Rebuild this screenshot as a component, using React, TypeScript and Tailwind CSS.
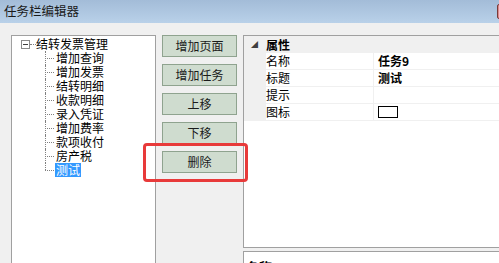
import React from "react";

const font = { fontFamily: '"Noto Sans CJK SC", "Noto Sans", sans-serif' };

const children = ["增加查询", "增加发票", "结转明细", "收款明细", "录入凭证", "增加费率", "款项收付", "房产税", "测试"];
const buttons = ["增加页面", "增加任务", "上移", "下移", "删除"];

function TreeChild({ label, last, selected }: { label: string; last: boolean; selected: boolean }) {
  return (
    <div className="flex h-[14px] items-stretch">
      <div className="relative ml-[33px] w-[10px] shrink-0">
        <div className={`absolute left-0 top-0 border-l border-dotted border-[#808080] ${last ? "h-[7px]" : "h-[14px]"}`} />
        <div className="absolute left-0 top-[7px] w-[9px] border-t border-dotted border-[#808080]" />
      </div>
      <div
        className={`px-[1px] text-[12px] leading-[14px] ${selected ? "bg-[#3399ff] text-white" : "text-black"}`}
      >
        {label}
      </div>
    </div>
  );
}

export default function App() {
  return (
    <div className="relative h-[263px] w-[499px] overflow-hidden bg-[#f0f0f0]" style={font}>
      {/* title bar */}
      <div className="flex h-[23px] items-center bg-gradient-to-b from-[#a3bcd8] to-[#b9d1e9] pl-[4px]">
        <span className="text-[12.5px] leading-none text-[#1a1a1a]">任务栏编辑器</span>
        <div className="ml-auto mr-[-4px] h-[15px] w-[6px] rounded-[2px] border border-[#7a3a3a] bg-[#d98c8c]" />
      </div>
      {/* body */}
      <div className="flex pl-[11px] pt-[12px]">
        {/* tree */}
        <div className="h-[260px] w-[145px] shrink-0 border border-[#a0a0a0] bg-white pt-[1px]">
          <div className="flex h-[14px] items-center">
            <div className="ml-[9px] flex h-[9px] w-[9px] shrink-0 items-center justify-center border border-[#8a8a8a] bg-white">
              <div className="h-[1px] w-[5px] bg-[#404040]" />
            </div>
            <div className="w-[6px] shrink-0 border-t border-dotted border-[#808080]" />
            <span className="text-[12px] leading-[14px] text-black">结转发票管理</span>
          </div>
          {children.map((c, i) => (
            <TreeChild key={c} label={c} last={i === children.length - 1} selected={c === "测试"} />
          ))}
        </div>
        {/* buttons */}
        <div className="flex w-[87px] shrink-0 flex-col gap-[7px] pl-[6px]">
          {buttons.map((b) => (
            <div
              key={b}
              className="flex h-[22px] w-[75px] items-center justify-center border border-[#8fa38f] bg-[#cfdccf] text-[12px] text-[#1a1a1a]"
            >
              {b}
            </div>
          ))}
        </div>
        {/* right */}
        <div className="flex w-[270px] shrink-0 flex-col gap-[3px]">
          <div className="h-[213px] border border-[#a0a0a0] bg-white">
            <div className="flex h-[17px] items-center bg-[#f0f0f0]">
              <span className="ml-[7px] w-[15px] text-[7px] leading-none text-[#404040]">◢</span>
              <span className="text-[12px] font-bold leading-[14px] text-black">属性</span>
            </div>
            {[
              ["名称", "任务9"],
              ["标题", "测试"],
              ["提示", ""],
              ["图标", "icon"],
            ].map(([k, v]) => (
              <div key={k} className="flex h-[17px]">
                <div className="w-[22px] shrink-0 bg-[#f0f0f0]" />
                <div className="flex w-[107px] shrink-0 items-center border-b border-[#f0f0f0] text-[12px] leading-[14px] text-black">
                  {k}
                </div>
                <div className="flex flex-1 items-center border-b border-l border-[#f0f0f0] pl-[4px] text-[12px] font-bold leading-[14px] text-black">
                  {v === "icon" ? <div className="h-[12px] w-[20px] border border-black bg-white" /> : v}
                </div>
              </div>
            ))}
          </div>
          <div className="h-[40px] border border-[#a0a0a0] bg-white pl-[2px] pt-[1px]">
            <span className="text-[13px] font-bold leading-[14px] text-black">名称</span>
          </div>
        </div>
      </div>
      {/* annotation highlight */}
      <div className="absolute left-[143px] top-[143px] h-[39px] w-[105px] rounded-[4px] border-[3px] border-[#e83a3a]" />
    </div>
  );
}
